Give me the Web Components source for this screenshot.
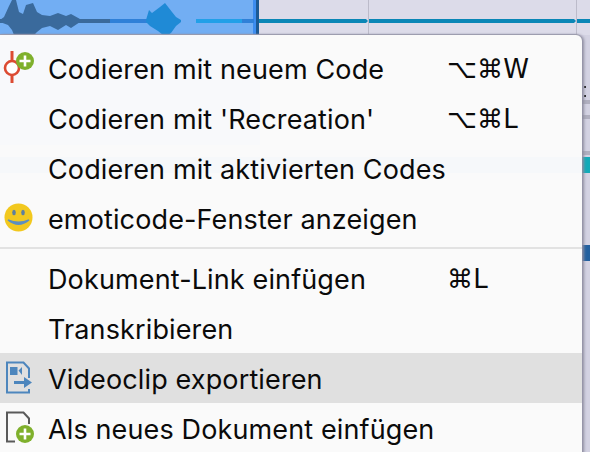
<!DOCTYPE html>
<html>
<head>
<meta charset="utf-8">
<style>
    html, body { margin: 0; height: 100%; overflow: hidden; }
    body { font-family: Inter, "Liberation Sans", sans-serif; }
</style>
</head>
<body>
<timeline-view>
    <context-menu>
        <menu-item shortcut="⌥⌘W">
            <svg slot="icon" width="36" height="40" viewBox="0 0 36 40">
                <path d="M12 3V35" stroke="#dc4b32" stroke-width="3"/>
                <circle cx="12" cy="20" r="7" fill="#fff" stroke="#dc4b32" stroke-width="2.6"/>
                <circle cx="25" cy="13" r="9" fill="#7fb02c"/>
                <path d="M25 7.500V18.500M19.500 13H30.500" stroke="#fff" stroke-width="2.600"/>
            </svg>
            Codieren mit neuem Code
        </menu-item>
        <menu-item shortcut="⌥⌘L">Codieren mit 'Recreation'</menu-item>
        <menu-item>Codieren mit aktivierten Codes</menu-item>
        <menu-item>
            <svg slot="icon" width="36" height="40" viewBox="0 0 36 40">
                <circle cx="18.500" cy="19.500" r="14" fill="#f2c81e"/>
                <ellipse cx="14" cy="14.500" rx="1.800" ry="2.800" fill="#5d7f9e"/>
                <ellipse cx="23" cy="14.500" rx="1.800" ry="2.800" fill="#5d7f9e"/>
                <path d="M8 22Q18.500 30.500 29 22Q18.500 26.500 8 22Z" fill="#5d8fc0" stroke="#5d8fc0" stroke-width="1.400"/>
            </svg>
            emoticode-Fenster anzeigen
        </menu-item>
        <menu-sep></menu-sep>
        <menu-item shortcut="⌘L">Dokument-Link einfügen</menu-item>
        <menu-item>Transkribieren</menu-item>
        <menu-item active>
            <svg slot="icon" width="36" height="40" viewBox="0 0 36 40">
                <path d="M29 20V10.500L23.500 4.500H7V34.500H29V31" fill="none" stroke="#4d86bd" stroke-width="2"/>
                <path d="M10 9H17.500V17H10ZM18.500 12.500L22 9V17Z" fill="#4d86bd"/>
                <path d="M14 23H24V19L32 24.500L24 30V26H14Z" fill="#4d86bd"/>
            </svg>
            Videoclip exportieren
        </menu-item>
        <menu-item>
            <svg slot="icon" width="36" height="40" viewBox="0 0 36 40">
                <path d="M15 33.500H7V4.500H23.500L29 10.500V16" fill="none" stroke="#5a5a5a" stroke-width="2"/>
                <circle cx="25" cy="26" r="9" fill="#7fb02c"/>
                <path d="M25 20.500V31.500M19.500 26H30.500" stroke="#fff" stroke-width="2.600"/>
            </svg>
            Als neues Dokument einfügen
        </menu-item>
    </context-menu>
</timeline-view>

<script>
class TimelineView extends HTMLElement {
    constructor() {
        super();
        this.attachShadow({mode: 'open'});
        this.shadowRoot.innerHTML = /*html*/`
        <style>
        :host {
            display: block;
            position: relative;
            width: 590px;
            height: 452px;
            overflow: hidden;
            background: #d3d2e2;
        }
        .track { display: block; }
        </style>
        <svg class="track" width="590" height="452" viewBox="0 0 590 452">
            <rect width="590" height="35" fill="#dcdbe9"/>
            <rect width="253" height="35" fill="#72aef3"/>
            <rect x="253" width="3" height="35" fill="#3d8df0"/>
            <rect x="256" width="3" height="35" fill="#1c5a94"/>
            <rect x="368" width="1" height="35" fill="#bcbbca"/>
            <rect x="576" width="1" height="35" fill="#bcbbca"/>
            <path d="M259 19H366L368 21L366 23H259ZM369 19H574L576 21L574 23H369ZM577 19H590V23H577Z" fill="#0a86b6"/>
            <rect y="19" width="110" height="4" fill="#3a6a9c"/>
            <rect x="110" y="19" width="38" height="4" fill="#2f80d8"/>
            <rect x="196" y="19" width="46" height="4" fill="#22a0e8"/>
            <rect x="242" y="19" width="12" height="4" fill="#2f80d8"/>
            <path d="M0 20L4 17L9 6L12 0H16L19 12L23 14L26 5L33 3L37 12L42 15L50 16L58 13L66 16L71 14L80 19V22L71 28L66 25L58 30L50 26L42 28L37 32L34 35H14L12 30L8 25L0 22Z" fill="#3a6a9c"/>
            <path d="M146 20L149 10L152 13L160 7L165 3L172 12L176 17L181 20V22L176 26L171 33L168 35H163L158 31L150 26L146 22Z" fill="#1f8ad6"/>
            <rect x="582" y="100" width="8" height="4" fill="#b0afbf"/>
            <rect x="582" y="115" width="8" height="4" fill="#b0afbf"/>
            <rect x="582" y="151" width="8" height="4" fill="#b0afbf"/>
            <rect x="582" y="157" width="8" height="16" fill="#12abb8"/>
            <rect x="582" y="245" width="8" height="16" fill="#23609f"/>
            <rect x="584" y="86" width="2" height="2" fill="#222"/>
            <rect x="584" y="95" width="2" height="2" fill="#222"/>
        </svg>
        <slot></slot>
        `;
    }
}

class ContextMenu extends HTMLElement {
    constructor() {
        super();
        this.attachShadow({mode: 'open'});
        this.shadowRoot.innerHTML = /*html*/`
        <style>
        :host {
            display: block;
            position: absolute;
            left: 0;
            top: 35px;
            width: 582px;
            height: 440px;
            box-sizing: border-box;
            padding-top: 8px;
            border-top-right-radius: 6px;
            background:
                linear-gradient(#f6f8fa, #f6f8fa) 0 122px / 100% 16px no-repeat,
                linear-gradient(#f8f9fb, #f8f9fb) 0 0 / 260px 110px no-repeat,
                #fafafa;
            box-shadow: 0 -1px 1px #9a99ab, 2px 0 3px #8e8da0;
        }
        </style>
        <slot></slot>
        `;
    }
}

class MenuItem extends HTMLElement {
    static get observedAttributes() {
        return ['shortcut'];
    }

    constructor() {
        super();
        this.attachShadow({mode: 'open'});
        this.shadowRoot.innerHTML = /*html*/`
        <style>
        :host {
            display: grid;
            grid-template-columns: 48px 401px 1fr;
            grid-template-rows: 50px;
            align-items: center;
            height: 50px;
            font-family: Inter, "Liberation Sans", sans-serif;
            font-size: 27px;
            letter-spacing: 0.13px;
            color: #0a0a0a;
            white-space: nowrap;
        }
        :host([active]) {
            background: #e0e0e0;
        }
        .icon {
            display: flex;
            height: 40px;
        }
        .label {
            box-sizing: border-box;
            height: 50px;
            line-height: 50px;
            padding-top: 2px;
        }
        .shortcut {
            font-family: "DejaVu Sans", sans-serif;
            font-size: 26px;
            margin-left: -2px;
            padding-top: 2px;
        }
        </style>
        <span class="icon"><slot name="icon"></slot></span>
        <span class="label"><slot></slot></span>
        <span class="shortcut"></span>
        `;
    }

    attributeChangedCallback(name, oldValue, newValue) {
        if (name === 'shortcut') {
            this.shadowRoot.querySelector('.shortcut').textContent = newValue;
        }
    }
}

class MenuSep extends HTMLElement {
    constructor() {
        super();
        this.attachShadow({mode: 'open'});
        this.shadowRoot.innerHTML = /*html*/`
        <style>
        :host {
            display: block;
            height: 10px;
            box-sizing: border-box;
            padding-top: 4px;
        }
        .line {
            height: 2px;
            background: #e2e2e2;
        }
        </style>
        <div class="line"></div>
        `;
    }
}

customElements.define('timeline-view', TimelineView);
customElements.define('context-menu', ContextMenu);
customElements.define('menu-item', MenuItem);
customElements.define('menu-sep', MenuSep);
</script>
</body>
</html>
